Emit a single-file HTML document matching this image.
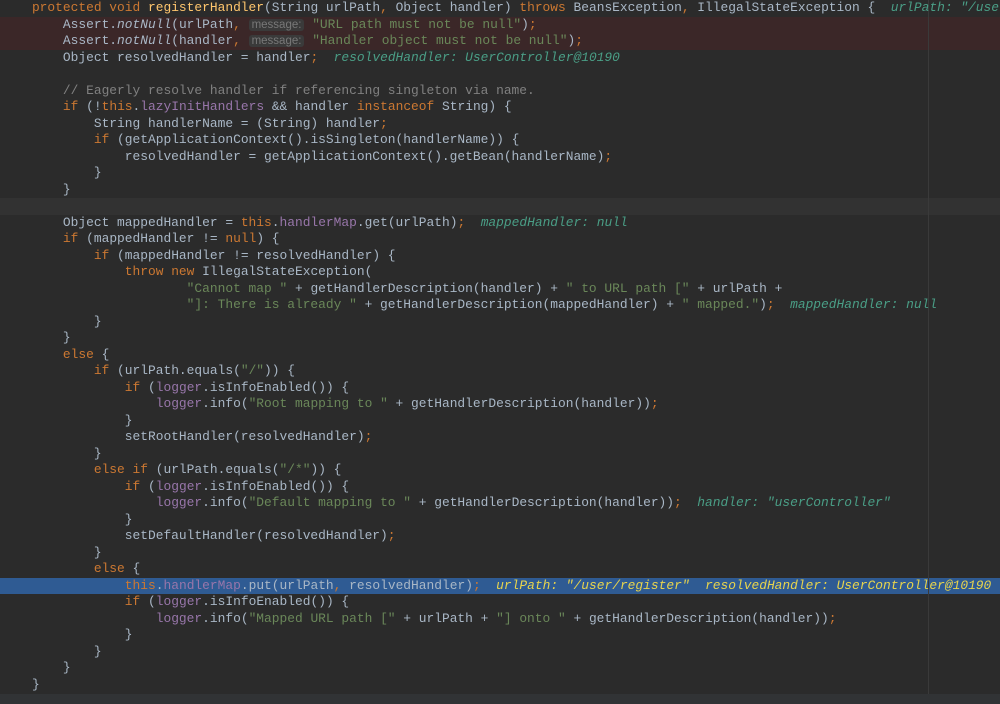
<!DOCTYPE html>
<html><head><meta charset="utf-8"><style>
body{margin:0;width:1000px;height:704px;background:#2b2b2b;overflow:hidden;position:relative}
.code{position:absolute;left:1px;top:0;width:999px;overflow:hidden;font-family:"Liberation Mono",monospace;font-size:12.9px;line-height:16.5px;color:#a9b7c6;white-space:pre;margin:0}
.band{position:absolute;left:0;width:1000px;height:16.5px}
.k{color:#cc7832}.s{color:#6a8759}.f{color:#9876aa}.m{color:#ffc66d}.c{color:#808080}.i{font-style:italic}
.h{color:#4a9e86;font-style:italic}.y{color:#e8d44d;font-style:italic}
.p{color:#787878;background:#3a3a3a;border-radius:3px;font-family:"Liberation Sans",sans-serif;font-size:11.5px;padding:0 3px}
.ml{position:absolute;left:928px;top:0;width:1px;height:704px;background:#3a3a3a}
</style></head><body>
<div class="band" style="top:16.5px;height:33px;background:#3b2728"></div>
<div class="band" style="top:198px;background:#323232"></div>
<div class="band" style="top:577.5px;background:#2f5b93"></div>
<div class="ml"></div>
<div class="band" style="top:694px;height:10px;background:#313335"></div>
<pre class="code"><span class="k">    protected void </span><span class="m">registerHandler</span>(String urlPath<span class="k">, </span>Object handler) <span class="k">throws </span>BeansException<span class="k">, </span>IllegalStateException {  <span class="h">urlPath: "/user/register"</span>
        Assert.<span class="i">notNull</span>(urlPath<span class="k">, </span><span class="p">message:</span> <span class="s">"URL path must not be null"</span>)<span class="k">;</span>
        Assert.<span class="i">notNull</span>(handler<span class="k">, </span><span class="p">message:</span> <span class="s">"Handler object must not be null"</span>)<span class="k">;</span>
        Object resolvedHandler = handler<span class="k">;</span>  <span class="h">resolvedHandler: UserController@10190</span>

        <span class="c">// Eagerly resolve handler if referencing singleton via name.</span>
        <span class="k">if </span>(!<span class="k">this</span>.<span class="f">lazyInitHandlers </span>&amp;&amp; handler <span class="k">instanceof </span>String) {
            String handlerName = (String) handler<span class="k">;</span>
            <span class="k">if </span>(getApplicationContext().isSingleton(handlerName)) {
                resolvedHandler = getApplicationContext().getBean(handlerName)<span class="k">;</span>
            }
        }

        Object mappedHandler = <span class="k">this</span>.<span class="f">handlerMap</span>.get(urlPath)<span class="k">;</span>  <span class="h">mappedHandler: null</span>
        <span class="k">if </span>(mappedHandler != <span class="k">null</span>) {
            <span class="k">if </span>(mappedHandler != resolvedHandler) {
                <span class="k">throw new </span>IllegalStateException(
                        <span class="s">"Cannot map " </span>+ getHandlerDescription(handler) + <span class="s">" to URL path [" </span>+ urlPath +
                        <span class="s">"]: There is already " </span>+ getHandlerDescription(mappedHandler) + <span class="s">" mapped."</span>)<span class="k">;</span>  <span class="h">mappedHandler: null</span>
            }
        }
        <span class="k">else </span>{
            <span class="k">if </span>(urlPath.equals(<span class="s">"/"</span>)) {
                <span class="k">if </span>(<span class="f">logger</span>.isInfoEnabled()) {
                    <span class="f">logger</span>.info(<span class="s">"Root mapping to " </span>+ getHandlerDescription(handler))<span class="k">;</span>
                }
                setRootHandler(resolvedHandler)<span class="k">;</span>
            }
            <span class="k">else if </span>(urlPath.equals(<span class="s">"/*"</span>)) {
                <span class="k">if </span>(<span class="f">logger</span>.isInfoEnabled()) {
                    <span class="f">logger</span>.info(<span class="s">"Default mapping to " </span>+ getHandlerDescription(handler))<span class="k">;</span>  <span class="h">handler: "userController"</span>
                }
                setDefaultHandler(resolvedHandler)<span class="k">;</span>
            }
            <span class="k">else </span>{
                <span class="k">this</span>.<span class="f">handlerMap</span>.put(urlPath<span class="k">, </span>resolvedHandler)<span class="k">;</span>  <span class="y">urlPath: "/user/register"</span>  <span class="y">resolvedHandler: UserController@10190</span>
                <span class="k">if </span>(<span class="f">logger</span>.isInfoEnabled()) {
                    <span class="f">logger</span>.info(<span class="s">"Mapped URL path [" </span>+ urlPath + <span class="s">"] onto " </span>+ getHandlerDescription(handler))<span class="k">;</span>
                }
            }
        }
    }</pre>
</body></html>
